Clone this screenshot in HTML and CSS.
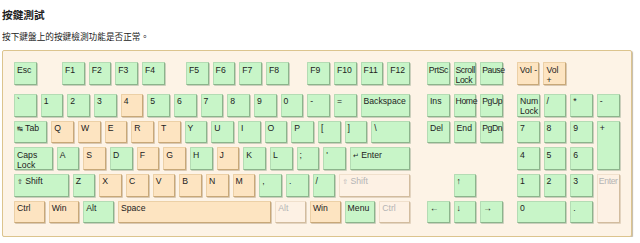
FILE: index.html
```html
<!DOCTYPE html>
<html lang="zh-Hant">
<head>
  <meta charset="UTF-8" />
  <meta name="viewport" content="width=device-width, initial-scale=1.0"/>
  <title>按鍵測試</title>
  <link rel="stylesheet" href="styles.css">
</head>
<body>
  <h2 class="title">按鍵測試</h2>
  <p class="desc">按下鍵盤上的按鍵檢測功能是否正常。</p>

  <div class="keyboard">
    <!-- Function row -->
    <div class="row fn-row">
      <div class="key ok">Esc</div>
      <div class="key ok gap-f1">F1</div>
      <div class="key ok">F2</div>
      <div class="key ok">F3</div>
      <div class="key ok">F4</div>
      <div class="key ok gap-f5">F5</div>
      <div class="key ok">F6</div>
      <div class="key ok">F7</div>
      <div class="key ok">F8</div>
      <div class="key ok gap-f9">F9</div>
      <div class="key ok">F10</div>
      <div class="key ok">F11</div>
      <div class="key ok">F12</div>
      <div class="key ok gap-nav tight">PrtSc</div>
      <div class="key ok tight">Scroll<br>Lock</div>
      <div class="key ok tight">Pause</div>
      <div class="key hit gap-num">Vol -</div>
      <div class="key hit">Vol<br>+</div>
    </div>

    <div class="lower">
      <!-- Main block -->
      <div class="main">
        <div class="row">
          <div class="key ok">`</div>
          <div class="key ok">1</div>
          <div class="key ok">2</div>
          <div class="key ok">3</div>
          <div class="key hit">4</div>
          <div class="key ok">5</div>
          <div class="key ok">6</div>
          <div class="key ok">7</div>
          <div class="key ok">8</div>
          <div class="key ok">9</div>
          <div class="key ok">0</div>
          <div class="key ok">-</div>
          <div class="key ok">=</div>
          <div class="key ok w2">Backspace</div>
        </div>
        <div class="row">
          <div class="key ok w14"><span class="sym">↹</span> Tab</div>
          <div class="key hit">Q</div>
          <div class="key hit">W</div>
          <div class="key hit">E</div>
          <div class="key hit">R</div>
          <div class="key hit">T</div>
          <div class="key ok">Y</div>
          <div class="key ok">U</div>
          <div class="key ok">I</div>
          <div class="key ok">O</div>
          <div class="key ok">P</div>
          <div class="key ok">[</div>
          <div class="key ok">]</div>
          <div class="key ok w16">\</div>
        </div>
        <div class="row">
          <div class="key ok w16">Caps<br>Lock</div>
          <div class="key ok">A</div>
          <div class="key hit">S</div>
          <div class="key ok">D</div>
          <div class="key hit">F</div>
          <div class="key hit">G</div>
          <div class="key ok">H</div>
          <div class="key hit">J</div>
          <div class="key ok">K</div>
          <div class="key ok">L</div>
          <div class="key ok">;</div>
          <div class="key ok">'</div>
          <div class="key ok w24"><span class="sym">↵</span> Enter</div>
        </div>
        <div class="row">
          <div class="key ok w22"><span class="sym">⇧</span> Shift</div>
          <div class="key ok">Z</div>
          <div class="key hit">X</div>
          <div class="key hit">C</div>
          <div class="key hit">V</div>
          <div class="key hit">B</div>
          <div class="key hit">N</div>
          <div class="key hit">M</div>
          <div class="key ok">,</div>
          <div class="key ok">.</div>
          <div class="key ok">/</div>
          <div class="key off w28"><span class="sym">⇧</span> Shift</div>
        </div>
        <div class="row">
          <div class="key hit w13">Ctrl</div>
          <div class="key hit w13">Win</div>
          <div class="key ok w13">Alt</div>
          <div class="key hit w59">Space</div>
          <div class="key off w13">Alt</div>
          <div class="key hit w13">Win</div>
          <div class="key ok w13">Menu</div>
          <div class="key off w13">Ctrl</div>
        </div>
      </div>

      <!-- Navigation block -->
      <div class="nav">
        <div class="key ok">Ins</div>
        <div class="key ok tight">Home</div>
        <div class="key ok tight">PgUp</div>
        <div class="key ok">Del</div>
        <div class="key ok">End</div>
        <div class="key ok tight">PgDn</div>
        <div class="key ok arrow-up">↑</div>
        <div class="key ok arrow-left">←</div>
        <div class="key ok arrow-down">↓</div>
        <div class="key ok arrow-right">→</div>
      </div>

      <!-- Numpad -->
      <div class="numpad">
        <div class="key ok">Num<br>Lock</div>
        <div class="key ok">/</div>
        <div class="key ok">*</div>
        <div class="key ok">-</div>
        <div class="key ok">7</div>
        <div class="key ok">8</div>
        <div class="key ok">9</div>
        <div class="key ok tall">+</div>
        <div class="key ok">4</div>
        <div class="key ok">5</div>
        <div class="key ok">6</div>
        <div class="key ok">1</div>
        <div class="key ok">2</div>
        <div class="key ok">3</div>
        <div class="key off tall tight">Enter</div>
        <div class="key ok wide">0</div>
        <div class="key ok">.</div>
      </div>
    </div>
  </div>
</body>
</html>
```

FILE: styles.css
```css
/* Page */
body {
  margin: 0 2px;
  background: #ffffff;
  color: #222222;
  font-family: "Noto Sans CJK TC", "Noto Sans", sans-serif;
}

.title {
  margin: 7px 0 0;
  font-size: 10.67px;
  line-height: 16px;
  font-weight: bold;
}

.desc {
  margin: 6px 0 0;
  font-size: 8.67px;
  line-height: 14px;
}

/* Keyboard frame */
.keyboard {
  --u: 26.667px;
  --k: 22.667px;
  box-sizing: border-box;
  width: 630px;
  margin-top: 7px;
  padding: 11px 11px 13px;
  background: #fdf3e6;
  border: 1px solid #dcc48e;
  border-radius: 2px;
  box-shadow: 1px 1px 1px rgba(120, 100, 60, 0.45);
  font-family: "Liberation Sans", Arial, "DejaVu Sans", sans-serif;
}

.row {
  display: flex;
  gap: 4px;
}

.lower {
  display: flex;
  margin-top: 9.33px;
}

.main {
  display: flex;
  flex-direction: column;
  gap: 4px;
}

.nav, .numpad {
  display: grid;
  grid-template-rows: repeat(5, var(--k));
  gap: 4px;
}

.nav {
  grid-template-columns: repeat(3, var(--k));
  margin-left: 17px;
}

.arrow-up { grid-area: 4 / 2; }
.arrow-left { grid-area: 5 / 1; }
.arrow-down { grid-area: 5 / 2; }
.arrow-right { grid-area: 5 / 3; }

.numpad {
  grid-template-columns: repeat(4, var(--k));
  margin-left: 14px;
}

.numpad .tall {
  grid-row: span 2;
  height: auto;
}

.numpad .wide {
  grid-column: span 2;
  width: auto;
}

/* Gaps in the function row */
.gap-f1 { margin-left: 21.33px; }
.gap-f5 { margin-left: 17.33px; }
.gap-f9 { margin-left: 14.67px; }
.gap-nav { margin-left: 13px; }
.gap-num { margin-left: 10px; }

/* Keys */
.key {
  box-sizing: border-box;
  flex: none;
  width: var(--k);
  height: var(--k);
  padding: 1.5px 2px;
  border: 1px solid;
  border-radius: 1px;
  font-size: 8.67px;
  line-height: 10px;
  white-space: nowrap;
  overflow: hidden;
}

/* long labels run up to the key edge */
.key.tight {
  padding-left: 1px;
  padding-right: 0;
  letter-spacing: -0.4px;
  overflow: visible;
}

.sym {
  font-family: "DejaVu Sans", sans-serif;
  font-size: 7px;
}

.w13 { width: calc(1.3 * var(--u) - 4px); }
.w14 { width: calc(1.4 * var(--u) - 4px); }
.w16 { width: calc(1.6 * var(--u) - 4px); }
.w2  { width: calc(2 * var(--u) - 4px); }
.w22 { width: calc(2.2 * var(--u) - 4px); }
.w24 { width: calc(2.4 * var(--u) - 4px); }
.w28 { width: calc(2.8 * var(--u) - 4px); }
.w59 { width: calc(5.9 * var(--u) - 4px); }

/* Tested and working */
.ok {
  background: #c8f5c8;
  border-color: #b4dcb4 #8cb48c #8cb48c #b4dcb4;
  box-shadow: 1px 1px 0 rgba(110, 140, 110, 0.35);
}

/* Pressed now */
.hit {
  background: #fde4c1;
  border-color: #ecd0a6 #c8a878 #c8a878 #ecd0a6;
  box-shadow: 1px 1px 0 rgba(150, 120, 80, 0.35);
}

/* Not tested yet */
.off {
  background: #fdf1e4;
  color: #b4b4b4;
  border-color: #f0e0cc #d2bc9e #d2bc9e #f0e0cc;
  box-shadow: 1px 1px 0 rgba(150, 120, 80, 0.25);
}
```
